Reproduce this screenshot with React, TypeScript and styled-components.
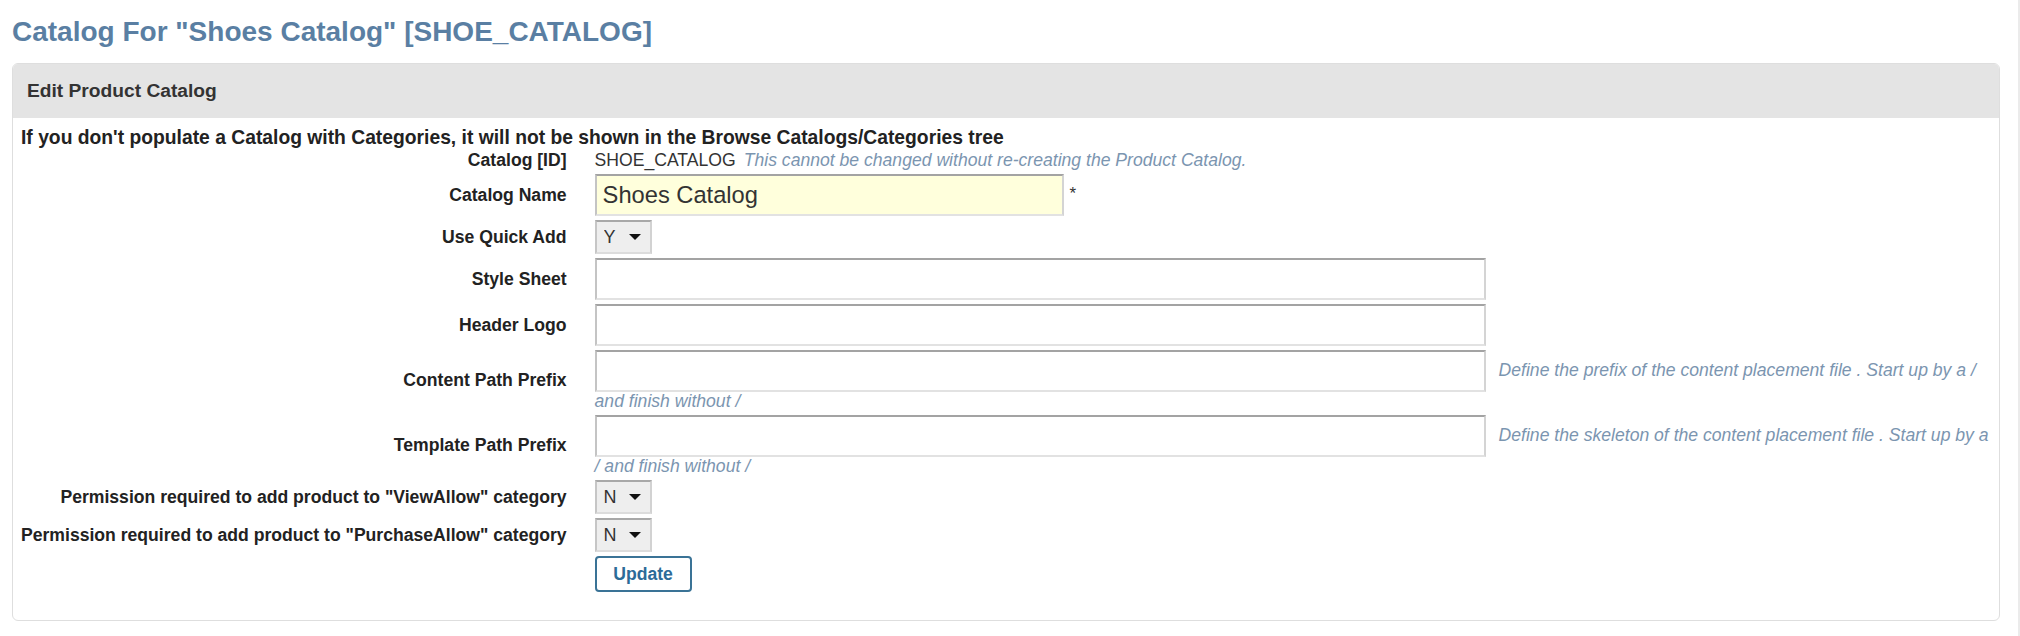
import styled, { createGlobalStyle } from 'styled-components'

const GlobalStyle = createGlobalStyle`
  body {
    margin: 0;
    background: #fff;
    font-family: "Liberation Sans", Arial, sans-serif;
    color: #333;
  }
`

const Page = styled.div`
  box-sizing: border-box;
  width: 2020px;
  min-height: 636px;
  padding: 16px 18px 0 12px;
  border-right: 2px solid #ebebeb;
`

const Title = styled.h1`
  margin: 0 0 15px;
  font-size: 28px;
  line-height: 32px;
  font-weight: bold;
  color: #5a7fa3;
`

const Panel = styled.section`
  border: 1px solid #dedede;
  border-radius: 6px;
  overflow: hidden;
`

const PanelHeader = styled.div`
  display: flex;
  align-items: center;
  height: 54px;
  padding-left: 14px;
  background: #e4e4e4;
  font-size: 19.2px;
  font-weight: bold;
  color: #333;
`

const PanelBody = styled.div`
  padding: 9px 8px 26px;
`

const Notice = styled.div`
  font-size: 19.3px;
  line-height: 22px;
  font-weight: bold;
  color: #222;
`

const FormGrid = styled.div`
  display: grid;
  grid-template-columns: max-content 1fr;
  column-gap: 28px;
  align-items: center;
`

const Label = styled.div`
  text-align: right;
  font-size: 17.6px;
  font-weight: bold;
  color: #222;
`

const Field = styled.div`
  padding: 2px 0;
  font-size: 17.6px;
  line-height: 19px;
  color: #333;
`

const Hint = styled.span<{ $gap?: number }>`
  margin-left: ${(p) => p.$gap ?? 13}px;
  font-style: italic;
  color: #7b95b0;
`

const TextInput = styled.input<{ $width: number; $required?: boolean }>`
  box-sizing: border-box;
  vertical-align: middle;
  width: ${(p) => p.$width}px;
  height: 42px;
  margin: 0;
  padding: 0 6px;
  border-style: solid;
  border-width: 2px;
  border-color: #a3a3a3 #d4d4d4 #e2e2e2 #c4c4c4;
  background: ${(p) => (p.$required ? '#ffffdc' : '#fff')};
  font-family: "Liberation Sans", Arial, sans-serif;
  font-size: 23.7px;
  color: #333;
  outline: none;
`

const Required = styled.span`
  margin-left: 6px;
  vertical-align: 1px;
  font-size: 17px;
  color: #333;
`

const SelectWrap = styled.span`
  position: relative;
  display: inline-block;
  vertical-align: middle;

  &::after {
    content: '';
    position: absolute;
    right: 11px;
    top: 14px;
    border-left: 6px solid transparent;
    border-right: 6px solid transparent;
    border-top: 6px solid #111;
    pointer-events: none;
  }
`

const Select = styled.select`
  box-sizing: border-box;
  appearance: none;
  width: 57px;
  height: 34px;
  margin: 0;
  padding: 0 0 0 7px;
  border-style: solid;
  border-width: 2px;
  border-color: #a8a8a8 #d2d2d2 #dcdcdc #c6c6c6;
  border-radius: 0;
  background: #eeeeee;
  font-family: "Liberation Sans", Arial, sans-serif;
  font-size: 18px;
  color: #333;
`

const Button = styled.button`
  box-sizing: border-box;
  vertical-align: middle;
  width: 97px;
  height: 36px;
  border: 2px solid #3a7396;
  border-radius: 4px;
  background: #fff;
  font-family: "Liberation Sans", Arial, sans-serif;
  font-size: 17.6px;
  font-weight: bold;
  color: #2c6b98;
`

function YesNo({ value }: { value: string }) {
  return (
    <SelectWrap>
      <Select defaultValue={value}>
        <option value="Y">Y</option>
        <option value="N">N</option>
      </Select>
    </SelectWrap>
  )
}

export default function App() {
  return (
    <Page>
      <GlobalStyle />
      <Title>Catalog For "Shoes Catalog" [SHOE_CATALOG]</Title>
      <Panel>
        <PanelHeader>Edit Product Catalog</PanelHeader>
        <PanelBody>
          <Notice>
            If you don't populate a Catalog with Categories, it will not be shown in the Browse
            Catalogs/Categories tree
          </Notice>
          <FormGrid>
            <Label>Catalog [ID]</Label>
            <Field>
              SHOE_CATALOG
              <Hint $gap={8}>This cannot be changed without re-creating the Product Catalog.</Hint>
            </Field>

            <Label>Catalog Name</Label>
            <Field>
              <TextInput $width={469} $required defaultValue="Shoes Catalog" />
              <Required>*</Required>
            </Field>

            <Label>Use Quick Add</Label>
            <Field>
              <YesNo value="Y" />
            </Field>

            <Label>Style Sheet</Label>
            <Field>
              <TextInput $width={891} />
            </Field>

            <Label>Header Logo</Label>
            <Field>
              <TextInput $width={891} />
            </Field>

            <Label>Content Path Prefix</Label>
            <Field>
              <TextInput $width={891} />
              <Hint>Define the prefix of the content placement file . Start up by a / and finish without /</Hint>
            </Field>

            <Label>Template Path Prefix</Label>
            <Field>
              <TextInput $width={891} />
              <Hint>Define the skeleton of the content placement file . Start up by a / and finish without /</Hint>
            </Field>

            <Label>Permission required to add product to "ViewAllow" category</Label>
            <Field>
              <YesNo value="N" />
            </Field>

            <Label>Permission required to add product to "PurchaseAllow" category</Label>
            <Field>
              <YesNo value="N" />
            </Field>

            <div />
            <Field>
              <Button type="button">Update</Button>
            </Field>
          </FormGrid>
        </PanelBody>
      </Panel>
    </Page>
  )
}
